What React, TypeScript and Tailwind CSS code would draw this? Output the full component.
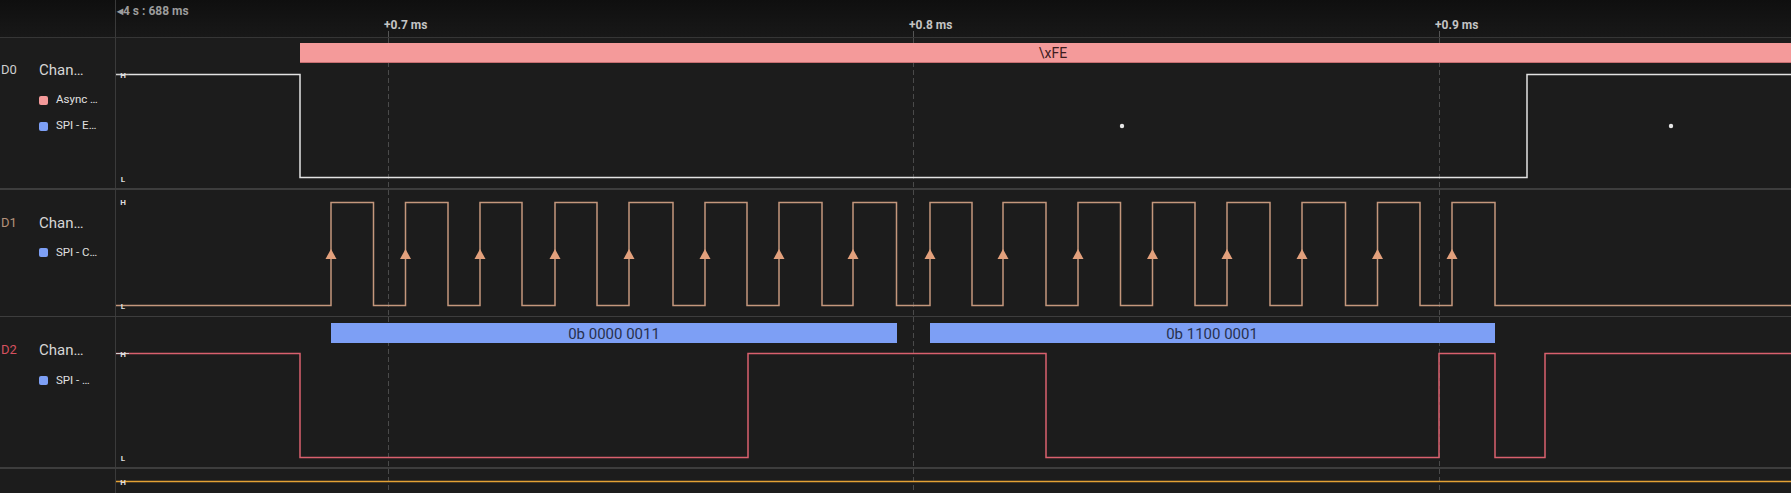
const X0 = 116;
const W = 1791 - X0;
const GRID = [388, 913, 1439];
const sx = (x: number) => x - X0;

const RISES = [331, 405.5, 480, 555, 629, 705, 779, 853, 930, 1003, 1078, 1152.5, 1227, 1302, 1377.5, 1452];
const FALLS = [373.5, 448, 522, 597, 673, 747, 822, 896.5, 972, 1046, 1120.5, 1195, 1270, 1345.5, 1420, 1495];

// build a digital step trace
function trace(startHigh: boolean, edges: number[], hi: number, lo: number) {
  let level = startHigh;
  const pts: string[] = [`${sx(X0)},${startHigh ? hi : lo}`];
  for (const e of edges) {
    const x = sx(e);
    pts.push(`${x},${level ? hi : lo}`);
    level = !level;
    pts.push(`${x},${level ? hi : lo}`);
  }
  pts.push(`${W},${level ? hi : lo}`);
  return pts.join(' ');
}

function Grid({ h }: { h: number }) {
  return (
    <>
      {GRID.map((g) => (
        <line key={g} x1={sx(g) + 0.5} x2={sx(g) + 0.5} y1={0} y2={h} stroke="#4a4a4a" strokeWidth={1} strokeDasharray="5 3" />
      ))}
    </>
  );
}

function Marker({ y, text, line }: { y: number; text: string; line?: boolean }) {
  return (
    <>
      {line && <line x1={0} x2={13} y1={y} y2={y} stroke="#d0d0d0" strokeWidth={1} />}
      <text x={7} y={y + 3} textAnchor="middle" fontSize={8} fontWeight={700} fill="#dedede" fontFamily="Roboto, sans-serif">
        {text}
      </text>
    </>
  );
}

type Legend = { color: string; text: string };

function ChannelLabel({ id, idColor, legends, padTop }: { id: string; idColor: string; legends: Legend[]; padTop: string }) {
  return (
    <div className={`w-[116px] shrink-0 border-r border-[#3a3a3a] flex ${padTop} overflow-hidden`}>
      <div className="w-[39px] shrink-0 pl-[1px] text-[13px] leading-[18px]" style={{ color: idColor }}>
        {id}
      </div>
      <div className="flex flex-col">
        <div className="text-[15px] leading-[18px] text-[#d6d6d6]">Chan…</div>
        <div className="flex flex-col gap-[10px] mt-[13px]">
          {legends.map((l) => (
            <div key={l.text} className="flex items-center gap-[8px] h-[16px]">
              <span className="w-[9px] h-[9px] rounded-[2px]" style={{ background: l.color }} />
              <span className="text-[11.5px] text-[#e0e0e0] whitespace-nowrap">{l.text}</span>
            </div>
          ))}
        </div>
      </div>
    </div>
  );
}

function Separator() {
  return <div className="h-[2px] bg-[#3d3d3d] w-full" />;
}

export default function App() {
  return (
    <div className="w-[1791px] h-[493px] overflow-hidden bg-[#1c1c1c] font-['Roboto',sans-serif] flex flex-col select-none">
      {/* ruler */}
      <div className="h-[38px] shrink-0 flex border-b border-[#363636] bg-gradient-to-b from-[#0f0f0f] to-[#181818]">
        <div className="w-[116px] shrink-0 border-r border-[#3a3a3a]" />
        <div className="relative flex-1">
          <div className="absolute left-[1px] top-[3px] text-[12px] font-bold text-[#9c9c9c] leading-[16px]">◂4 s : 688 ms</div>
          {[
            { x: 388, t: '+0.7 ms' },
            { x: 913, t: '+0.8 ms' },
            { x: 1439, t: '+0.9 ms' },
          ].map((m) => (
            <div key={m.t} className="absolute top-[17px] text-[12px] font-bold text-[#c4c4c4] leading-[16px]" style={{ left: sx(m.x) - 4 }}>
              {m.t}
            </div>
          ))}
          <svg className="absolute left-0 top-0" width={W} height={37}>
            {GRID.map((g) => (
              <line key={g} x1={sx(g) + 0.5} x2={sx(g) + 0.5} y1={31} y2={37} stroke="#555" strokeWidth={1} />
            ))}
          </svg>
        </div>
      </div>

      {/* D0 */}
      <div className="h-[150px] shrink-0 flex">
        <ChannelLabel
          id="D0"
          idColor="#cfcfcf"
          padTop="pt-[23px]"
          legends={[
            { color: '#f49a9a', text: 'Async …' },
            { color: '#7d9ff5', text: 'SPI - E…' },
          ]}
        />
        <svg width={W} height={150} className="shrink-0">
          <Grid h={150} />
          <rect x={sx(300)} y={5} width={W} height={20} fill="#f49a9a" />
          <line x1={sx(300)} x2={W} y1={24.5} y2={24.5} stroke="#c76f72" strokeWidth={1} />
          <text x={sx(1053)} y={20} textAnchor="middle" fontSize={14} fill="#3d1c1e" fontFamily="Roboto, sans-serif">
            {'\\xFE'}
          </text>
          <polyline points={trace(true, [300, 1527], 36.5, 139.5)} fill="none" stroke="#e2e2e2" strokeWidth={1.5} />
          <Marker y={36.5} text="H" line />
          <Marker y={141} text="L" />
          <circle cx={sx(1122)} cy={88} r={2.2} fill="#e6e6e6" />
          <circle cx={sx(1671)} cy={88} r={2.2} fill="#e6e6e6" />
        </svg>
      </div>
      <Separator />

      {/* D1 */}
      <div className="h-[126px] shrink-0 flex">
        <ChannelLabel id="D1" idColor="#b4917a" padTop="pt-[24px]" legends={[{ color: '#7d9ff5', text: 'SPI - C…' }]} />
        <svg width={W} height={126} className="shrink-0">
          <Grid h={126} />
          <polyline
            points={trace(false, [...RISES, ...FALLS].sort((a, b) => a - b), 12.5, 115.5)}
            fill="none"
            stroke="#c4977c"
            strokeWidth={1.5}
          />
          {RISES.map((r) => (
            <polygon key={r} points={`${sx(r) - 5.5},69 ${sx(r) + 5.5},69 ${sx(r)},59`} fill="#e2a07c" />
          ))}
          <Marker y={12} text="H" />
          <line x1={0} x2={13} y1={115.5} y2={115.5} stroke="#c4977c" strokeWidth={1} />
          <Marker y={115.5} text="L" />
        </svg>
      </div>
      <Separator />

      {/* D2 */}
      <div className="h-[150px] shrink-0 flex">
        <ChannelLabel id="D2" idColor="#d6515f" padTop="pt-[24px]" legends={[{ color: '#7d9ff5', text: 'SPI - …' }]} />
        <svg width={W} height={150} className="shrink-0">
          <Grid h={150} />
          <rect x={sx(331)} y={6} width={897 - 331} height={20} fill="#7d9ff5" />
          <rect x={sx(930)} y={6} width={1495 - 930} height={20} fill="#7d9ff5" />
          <text x={sx(614)} y={21.5} textAnchor="middle" fontSize={15} fill="#28314f" fontFamily="Roboto, sans-serif">
            0b 0000 0011
          </text>
          <text x={sx(1212)} y={21.5} textAnchor="middle" fontSize={15} fill="#28314f" fontFamily="Roboto, sans-serif">
            0b 1100 0001
          </text>
          <polyline points={trace(true, [300, 748, 1046, 1439, 1495, 1545], 36.5, 140.5)} fill="none" stroke="#d9606e" strokeWidth={1.5} />
          <Marker y={36.5} text="H" line />
          <Marker y={141} text="L" />
        </svg>
      </div>
      <Separator />

      {/* D3 */}
      <div className="flex-1 flex">
        <div className="w-[116px] shrink-0 border-r border-[#3a3a3a]" />
        <svg width={W} height={24} className="shrink-0">
          <Grid h={24} />
          <line x1={0} x2={W} y1={12.5} y2={12.5} stroke="#e5a235" strokeWidth={1.5} />
          <Marker y={12.5} text="H" />
        </svg>
      </div>
    </div>
  );
}
